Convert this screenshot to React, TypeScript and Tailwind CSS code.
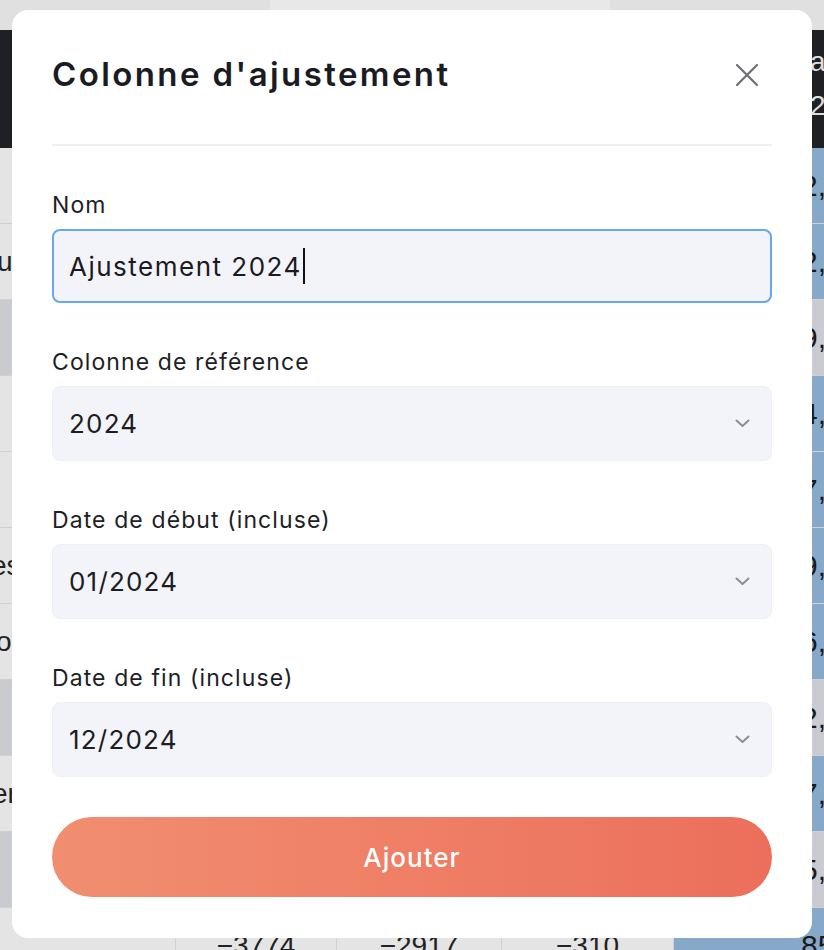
import React from "react";

type Row = { kind: "w" | "g"; left?: string; shift?: string; right: string; nums?: string[] };

const rows: Row[] = [
  { kind: "w", right: "2,481" },
  { kind: "w", left: "ur", shift: "-ml-[3px]", right: "2,105" },
  { kind: "g", right: "9,320" },
  { kind: "w", right: "4,870" },
  { kind: "w", right: "7,215" },
  { kind: "w", left: "es", shift: "-ml-[9px]", right: "9,004" },
  { kind: "w", left: "o", shift: "-ml-[4px]", right: "6,532" },
  { kind: "g", right: "2,918" },
  { kind: "w", left: "er", shift: "-ml-[8px]", right: "7,640" },
  { kind: "g", right: "5,377" },
  { kind: "w", right: "85", nums: ["−3774", "−2917", "−310"] },
];

function Chevron() {
  return (
    <svg width="15" height="9" viewBox="0 0 15 9" fill="none">
      <path d="M1.5 1.5 L7.5 7 L13.5 1.5" stroke="#8d8d93" strokeWidth="2" strokeLinecap="round" strokeLinejoin="round" />
    </svg>
  );
}

function SelectField({ label, value }: { label: string; value: string }) {
  return (
    <div className="flex flex-col mt-[40px]">
      <div className="h-[32px] leading-[38px] text-[23px] tracking-[1.1px] text-[#1e1e26]">{label}</div>
      <div className="mt-[11px] h-[75px] rounded-[8px] bg-[#f3f4f9] border border-[#eef0f5] flex items-center justify-between pl-[16px] pr-[21px]">
        <span className="text-[26px] tracking-[1.2px] text-[#1c1c22]">{value}</span>
        <Chevron />
      </div>
    </div>
  );
}

export default function App() {
  return (
    <div className="relative w-[824px] h-[950px] overflow-hidden bg-[#e3e3e3]">
      {/* background table */}
      <div className="flex flex-col font-['Liberation_Sans',Arial,sans-serif]">
        <div className="h-[30px] flex">
          <div className="w-[270px] bg-[#e0e0e0]" />
          <div className="w-[340px] bg-[#e8e8e8]" />
          <div className="flex-1 bg-[#e0e0e0]" />
        </div>
        <div className="h-[118px] bg-[#1f2024] flex">
          <div className="w-[810px] shrink-0" />
          <div className="flex flex-col text-[28px] leading-[44px] text-[#dedede] pt-[10px] whitespace-nowrap">
            <span>ajusté</span>
            <span>2024</span>
          </div>
        </div>
        {rows.map((r, i) => (
          <div
            key={i}
            className={`h-[76px] flex border-b border-[#d0d0d0] ${r.kind === "g" ? "bg-[#c9cbd1]" : "bg-[#e4e4e4]"}`}
          >
            <div className="w-[176px] shrink-0 border-r border-[#d3d3d3] flex items-center text-[28px] text-[#222] whitespace-nowrap">
              {r.left && <span className={r.shift}>{r.left}</span>}
            </div>
            <div className="w-[161px] shrink-0 border-r border-[#d3d3d3] flex items-center justify-center text-[28px] text-[#222]">
              {r.nums && r.nums[0]}
            </div>
            <div className="w-[165px] shrink-0 border-r border-[#d3d3d3] flex items-center justify-center text-[28px] text-[#222]">
              {r.nums && r.nums[1]}
            </div>
            <div className="w-[172px] shrink-0 border-r border-[#d3d3d3] flex items-center justify-center text-[28px] text-[#222]">
              {r.nums && r.nums[2]}
            </div>
            <div
              className={`w-[300px] shrink-0 flex items-center pl-[127px] text-[30px] text-[#1a1a1a] whitespace-nowrap ${
                r.kind === "g" ? "bg-[#c9cbd1]" : "bg-[#87a9c9]"
              }`}
            >
              {r.right}
            </div>
          </div>
        ))}
      </div>

      {/* modal */}
      <div className="absolute left-[12px] top-[10px] w-[800px] h-[928px] bg-white rounded-[16px] px-[40px] flex flex-col font-['Inter',sans-serif]">
        <div className="h-[136px] pb-[4px] flex items-center justify-between border-b-2 border-[#f0f0f4]">
          <h2 className="text-[33px] font-semibold text-[#1b1b24] tracking-[2.4px]">Colonne d'ajustement</h2>
          <svg width="24" height="24" viewBox="0 0 24 24" className="mr-[13px]" fill="none">
            <path d="M2 2 L22 22 M22 2 L2 22" stroke="#6e6e74" strokeWidth="2.2" strokeLinecap="round" />
          </svg>
        </div>

        <div className="flex flex-col mt-[40px]">
          <div className="h-[32px] leading-[38px] text-[23px] tracking-[1.1px] text-[#1e1e26]">Nom</div>
          <div className="mt-[11px] h-[74px] rounded-[8px] bg-[#f3f4f9] border-2 border-[#66a7f2] flex items-center pl-[15px]">
            <span className="text-[26px] tracking-[1.5px] text-[#1a1a1f]">Ajustement 2024</span>
            <span className="w-[2px] h-[36px] bg-[#111] ml-[1px]" />
          </div>
        </div>

        <SelectField label="Colonne de référence" value="2024" />
        <SelectField label="Date de début (incluse)" value="01/2024" />
        <SelectField label="Date de fin (incluse)" value="12/2024" />

        <button className="mt-[40px] h-[80px] rounded-full bg-gradient-to-r from-[#f18e70] to-[#ec6f5b] text-white text-[26px] tracking-[1px] font-medium">
          Ajouter
        </button>
      </div>
    </div>
  );
}
